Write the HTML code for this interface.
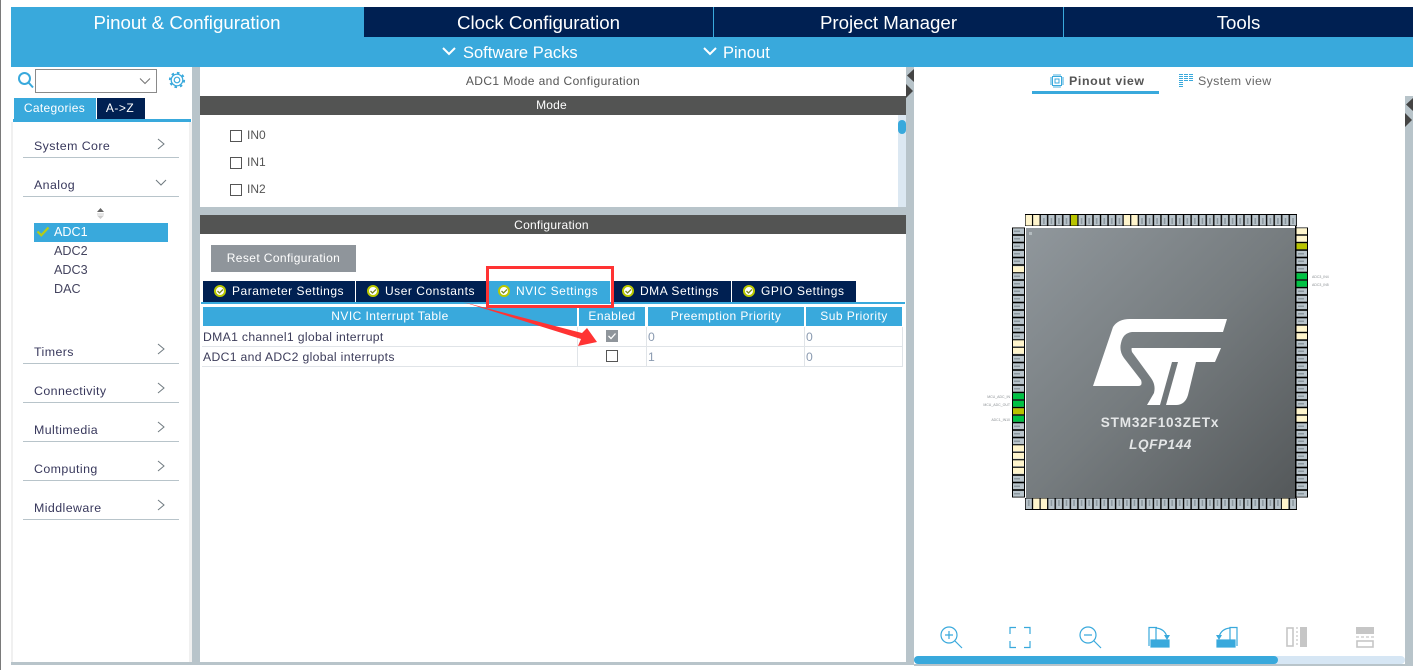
<!DOCTYPE html>
<html><head><meta charset="utf-8"><title>STM32CubeMX</title>
<style>
html,body{margin:0;padding:0;background:#fff}
body{width:1420px;height:670px;position:relative;overflow:hidden;font-family:"Liberation Sans",sans-serif;font-size:12px;color:#3c3c5a}
.a{position:absolute;box-sizing:border-box;white-space:nowrap}
.c{text-align:center}
.hd{font-size:18.7px;color:#fff;line-height:31px;text-align:center;top:7px;height:30px}
.dk{background:#002052}
.bl{background:#39a9dc}
.gr{background:#b8c4ca}
.bar{background:#535453;color:#fff;text-align:center;line-height:19px;height:19px;padding-right:3px}
.cat{left:34px;font-size:12.4px;letter-spacing:.42px;color:#38385c;line-height:16px}
.ln{left:23px;width:156px;height:1px;background:#b8c4ca}
.tab{top:281px;height:21px;background:#002052;color:#fff;line-height:21px;letter-spacing:.52px;font-size:12px}
.th{top:307px;height:19px;background:#39a9dc;color:#fff;text-align:center;line-height:19px;letter-spacing:.45px}
.td{font-size:12.2px;letter-spacing:.33px;line-height:16px}
.cb{width:12px;height:12px;border:1px solid #555;background:#fff}
</style></head><body>
<div class="a" style="left:0;top:0;width:1px;height:670px;background:#7a7a7a"></div>
<!-- header -->
<div class="a bl" style="left:11px;top:7px;width:1402px;height:60px"></div>
<div class="a hd" style="left:11px;width:352px">Pinout &amp; Configuration</div>
<div class="a hd dk" style="left:364px;width:349px">Clock Configuration</div>
<div class="a hd dk" style="left:714px;width:349px">Project Manager</div>
<div class="a hd dk" style="left:1064px;width:349px">Tools</div>
<div class="a" style="left:463px;top:44px;font-size:16.5px;line-height:18px;color:#fff">Software Packs</div>
<div class="a" style="left:723px;top:44px;font-size:16.5px;line-height:18px;color:#fff">Pinout</div>
<svg class="a" style="left:440px;top:46px" width="290" height="14" fill="none" stroke="#fff" stroke-width="2"><path d="M3 2l6 6 6-6M264 2l6 6 6-6"/></svg>

<!-- left panel -->
<div class="a" style="left:11px;top:122px;width:181px;height:540px;background:#fff;border-left:2px solid #f0f0f0;border-right:3px solid #f0f0f0"></div>
<div class="a gr" style="left:192px;top:67px;width:8px;height:598px"></div>
<svg class="a" style="left:17px;top:71px" width="18" height="20" fill="none" stroke="#39a9dc" stroke-width="2"><circle cx="7.5" cy="7.5" r="5.5"/><path d="M11.5 11.5l4.5 5"/></svg>
<div class="a" style="left:35px;top:69px;width:122px;height:24px;border:1px solid #8a8a8a;background:#fff"></div>
<svg class="a" style="left:139px;top:77px" width="14" height="9" fill="none" stroke="#777" stroke-width="1.1"><path d="M1 1.5l5 5 5-5"/></svg>
<svg class="a" style="left:168px;top:71px" width="18" height="18" viewBox="0 0 18 18" fill="none" stroke="#39a9dc"><circle cx="9" cy="9" r="2.8" stroke-width="1.2"/><circle cx="9" cy="9" r="5.8" stroke-width="1.2"/><circle cx="9" cy="9" r="7.2" stroke-width="1.8" stroke-dasharray="2.6 3"/></svg>
<div class="a bl c" style="left:14px;top:98px;width:82px;height:21px;color:#fff;line-height:21px;letter-spacing:.32px;padding-right:1px">Categories</div>
<div class="a dk c" style="left:97px;top:98px;width:48px;height:21px;color:#fff;line-height:21px;letter-spacing:.5px;padding-right:2px">A-&gt;Z</div>
<div class="a bl" style="left:13px;top:119px;width:178px;height:3px"></div>

<div class="a cat" style="top:138px">System Core</div><div class="a ln" style="top:157px"></div>
<div class="a cat" style="top:177px">Analog</div><div class="a ln" style="top:196px"></div>
<div class="a cat" style="top:344px">Timers</div><div class="a ln" style="top:363px"></div>
<div class="a cat" style="top:383px">Connectivity</div><div class="a ln" style="top:402px"></div>
<div class="a cat" style="top:422px">Multimedia</div><div class="a ln" style="top:441px"></div>
<div class="a cat" style="top:461px">Computing</div><div class="a ln" style="top:480px"></div>
<div class="a cat" style="top:500px">Middleware</div><div class="a ln" style="top:519px"></div>
<svg class="a" style="left:150px;top:130px" width="24" height="390" fill="none" stroke="#6f7a80" stroke-width="1">
<path d="M8 9l6 5-6 5M6 50l5 5 5-5M8 214l6 5-6 5M8 253l6 5-6 5M8 292l6 5-6 5M8 331l6 5-6 5M8 370l6 5-6 5"/></svg>
<svg class="a" style="left:96px;top:208px" width="9" height="12"><path d="M4.5 0L8 4H1z" fill="#666"/><path d="M1 5.5h7v1H1z" fill="#ccc"/><path d="M4.5 11L8 7.5H1z" fill="#ccc"/></svg>
<div class="a bl" style="left:34px;top:223px;width:134px;height:19px"></div>
<svg class="a" style="left:36px;top:226px" width="14" height="12" fill="none" stroke="#b5cc18" stroke-width="2.2"><path d="M1.5 5.5l3.8 3.8L12.5 1.5"/></svg>
<div class="a" style="left:54px;top:224px;line-height:17px;font-size:12.6px;color:#fff">ADC1</div>
<div class="a" style="left:54px;top:243px;line-height:17px;font-size:12.6px;color:#44445f">ADC2</div>
<div class="a" style="left:54px;top:262px;line-height:17px;font-size:12.6px;color:#44445f">ADC3</div>
<div class="a" style="left:54px;top:281px;line-height:17px;font-size:12.6px;color:#44445f">DAC</div>

<!-- center panel -->
<div class="a c" style="left:200px;top:73px;width:706px;line-height:16px;color:#555;letter-spacing:.4px">ADC1 Mode and Configuration</div>
<div class="a bar" style="left:200px;top:96px;width:706px;letter-spacing:.2px">Mode</div>
<div class="a cb" style="left:230px;top:130px"></div><div class="a" style="left:247px;top:127px;line-height:16px;color:#555">IN0</div>
<div class="a cb" style="left:230px;top:157px"></div><div class="a" style="left:247px;top:154px;line-height:16px;color:#555">IN1</div>
<div class="a cb" style="left:230px;top:184px"></div><div class="a" style="left:247px;top:181px;line-height:16px;color:#555">IN2</div>
<div class="a" style="left:898px;top:115px;width:8px;height:92px;background:#dce8f2"></div>
<div class="a bl" style="left:898px;top:120px;width:8px;height:14px;border-radius:4px"></div>
<div class="a gr" style="left:200px;top:207px;width:706px;height:8px"></div>
<div class="a bar" style="left:200px;top:215px;width:706px;line-height:21px;letter-spacing:.25px">Configuration</div>
<div class="a c" style="left:211px;top:245px;width:145px;height:27px;background:#8f959b;color:#fff;line-height:27px;letter-spacing:.39px">Reset Configuration</div>

<div class="a tab" style="left:203px;width:152px;padding-left:29px">Parameter Settings</div>
<div class="a tab" style="left:356px;width:131px;padding-left:29px">User Constants</div>
<div class="a tab bl" style="left:488px;width:122px;padding-left:28px;background:#39a9dc">NVIC Settings</div>
<div class="a tab" style="left:611px;width:120px;padding-left:29px">DMA Settings</div>
<div class="a tab" style="left:732px;width:124px;padding-left:29px">GPIO Settings</div>
<svg class="a" style="left:200px;top:281px" width="560" height="21" fill="none">
<g fill="#fff" stroke="#b9c800" stroke-width="2"><circle cx="20" cy="10" r="5"/><circle cx="173" cy="10" r="5"/><circle cx="304" cy="10" r="5"/><circle cx="428" cy="10" r="5"/><circle cx="549" cy="10" r="5"/></g>
<g stroke="#7d8a20" stroke-width="1.3"><path d="M17.5 10l2 2 3.5-3.5M170.500 10l2 2 3.5-3.5M301.500 10l2 2 3.5-3.5M425.500 10l2 2 3.5-3.5M546.500 10l2 2 3.5-3.5"/></g></svg>
<div class="a bl" style="left:201px;top:302px;width:704px;height:2px"></div>

<div class="a th" style="left:203px;width:374px">NVIC Interrupt Table</div>
<div class="a th" style="left:579px;width:66px">Enabled</div>
<div class="a th" style="left:648px;width:156px">Preemption Priority</div>
<div class="a th" style="left:806px;width:96px">Sub Priority</div>
<div class="a" style="left:202px;top:346px;width:701px;height:1px;background:#e0e4e8"></div>
<div class="a" style="left:202px;top:366px;width:701px;height:1px;background:#e0e4e8"></div>
<div class="a" style="left:577px;top:327px;width:1px;height:40px;background:#e0e4e8"></div>
<div class="a" style="left:646px;top:327px;width:1px;height:40px;background:#e0e4e8"></div>
<div class="a" style="left:804px;top:327px;width:1px;height:40px;background:#e0e4e8"></div>
<div class="a" style="left:902px;top:327px;width:1px;height:40px;background:#e0e4e8"></div>
<div class="a td" style="left:203px;top:329px">DMA1 channel1 global interrupt</div>
<div class="a td" style="left:203px;top:349px">ADC1 and ADC2 global interrupts</div>
<div class="a td" style="left:648px;top:329px;color:#8a9ab0">0</div>
<div class="a td" style="left:648px;top:349px;color:#8a9ab0">1</div>
<div class="a td" style="left:806px;top:329px;color:#8a9ab0">0</div>
<div class="a td" style="left:806px;top:349px;color:#8a9ab0">0</div>
<svg class="a" style="left:606px;top:330px" width="12" height="12"><rect width="12" height="12" fill="#8f959b"/><path d="M2.5 6l2.5 2.5 4.5-5" fill="none" stroke="#fff" stroke-width="1.3"/></svg>
<div class="a cb" style="left:606px;top:350px"></div>

<!-- annotations -->
<svg class="a" style="left:0;top:0" width="1420" height="670" fill="none">
<rect x="487.500" y="267.500" width="125" height="39" stroke="#ff3333" stroke-width="3"/>
<path d="M463 302L582 333L587 328L597 342L578 346L581 339Z" fill="#ff3333"/>
</svg>

<!-- right side strips -->
<div class="a gr" style="left:906px;top:67px;width:8px;height:598px"></div>
<div class="a gr" style="left:1405px;top:96px;width:8px;height:570px"></div>
<div class="a gr" style="left:200px;top:662px;width:706px;height:3px"></div>
<div class="a gr" style="left:11px;top:662px;width:181px;height:3px"></div>
<svg class="a" style="left:906px;top:67px" width="8" height="32"><path d="M8 2V15L1 8.500z" fill="#444"/><path d="M0 17L7 24L0 31z" fill="#444"/></svg>
<svg class="a" style="left:1405px;top:96px" width="8" height="34"><path d="M8 2V15L1 8.500z" fill="#444"/><path d="M0 17L7 24L0 31z" fill="#444"/></svg>

<!-- view tabs -->
<svg class="a" style="left:1050px;top:74px" width="14" height="14" fill="none" stroke="#39a9dc"><rect x="2.500" y="2.500" width="9" height="9" stroke-width="1"/><rect x="5" y="5" width="4" height="4" stroke-width="1"/><path d="M4 0v2M6 0v2M8 0v2M10 0v2M4 12v2M6 12v2M8 12v2M10 12v2M0 4h2M0 6h2M0 8h2M0 10h2M12 4h2M12 6h2M12 8h2M12 10h2" stroke-width=".9"/></svg>
<div class="a" style="left:1069px;top:73px;line-height:16px;font-weight:bold;color:#555;letter-spacing:.62px;font-size:12.4px">Pinout view</div>
<div class="a bl" style="left:1032px;top:91px;width:127px;height:3px"></div>
<svg class="a" style="left:1179px;top:74px" width="15" height="14" stroke="#39a9dc" stroke-width="1" fill="none"><path d="M0 .500h4M5 .500h4M10 .500h4M0 2.500h4M5 2.500h4M10 2.500h4M0 4.500h4M5 4.500h4M10 4.500h4M0 6.500h4M5 6.500h4M10 6.500h4M0 8.500h4M0 10.500h4M0 12.500h4"/></svg>
<div class="a" style="left:1198px;top:73px;line-height:16px;color:#666;letter-spacing:.36px;font-size:12.4px">System view</div>

<!-- chip -->
<svg class="a" style="left:980px;top:205px" width="360" height="315" viewBox="980 205 360 315">
<defs>
<linearGradient id="g" x1="0" y1="0" x2="1" y2="1"><stop offset="0" stop-color="#90979c"/><stop offset=".5" stop-color="#767c7f"/><stop offset="1" stop-color="#54585a"/></linearGradient>
<pattern id="pt" x="1025" y="214" width="7.550" height="12" patternUnits="userSpaceOnUse"><rect width="7.550" height="12" fill="#000"/><rect x=".7" y="1" width="6.200" height="10.500" fill="#b9c4cb"/><rect x="3" y="4" width="1.500" height="6" fill="#8b979e"/></pattern>
<pattern id="pb" x="1025" y="498" width="7.550" height="12" patternUnits="userSpaceOnUse"><rect width="7.550" height="12" fill="#000"/><rect x=".7" y=".5" width="6.200" height="10.500" fill="#b9c4cb"/><rect x="3" y="2" width="1.500" height="6" fill="#8b979e"/></pattern>
<pattern id="pl" x="1012" y="227.500" width="13" height="7.500" patternUnits="userSpaceOnUse"><rect width="13" height="7.500" fill="#000"/><rect x="1" y=".8" width="11" height="5.900" fill="#b9c4cb"/><rect x="2" y="3" width="6" height="1.500" fill="#8b979e"/></pattern>
<pattern id="pr" x="1295" y="227.500" width="13" height="7.500" patternUnits="userSpaceOnUse"><rect width="13" height="7.500" fill="#000"/><rect x="1" y=".8" width="11" height="5.900" fill="#b9c4cb"/><rect x="3" y="3" width="6" height="1.500" fill="#8b979e"/></pattern>
</defs>
<rect x="1025" y="214" width="272" height="12" fill="url(#pt)"/>
<rect x="1025" y="498" width="272" height="12" fill="url(#pb)"/>
<rect x="1012" y="227.500" width="13" height="270" fill="url(#pl)"/>
<rect x="1295" y="227.500" width="13" height="270" fill="url(#pr)"/>
<g fill="#fff5cc">
<rect x="1025.700" y="215" width="6.200" height="10.500"/><rect x="1033.250" y="215" width="6.200" height="10.500"/><rect x="1123.800" y="215" width="6.200" height="10.500"/><rect x="1131.400" y="215" width="6.200" height="10.500"/>
<rect x="1033.250" y="498.500" width="6.200" height="10.500"/><rect x="1040.800" y="498.500" width="6.200" height="10.500"/><rect x="1282" y="498.500" width="6.200" height="10.500"/>
<rect x="1013" y="266.300" width="11" height="5.900"/><rect x="1013" y="340.300" width="11" height="5.900"/><rect x="1013" y="347.800" width="11" height="5.900"/><rect x="1013" y="445.300" width="11" height="5.900"/><rect x="1013" y="452.800" width="11" height="5.900"/><rect x="1013" y="460.300" width="11" height="5.900"/><rect x="1013" y="467.800" width="11" height="5.900"/>
<rect x="1296" y="228.300" width="11" height="5.900"/><rect x="1296" y="235.800" width="11" height="5.900"/><rect x="1296" y="325.800" width="11" height="5.900"/><rect x="1296" y="333.300" width="11" height="5.900"/><rect x="1296" y="408.300" width="11" height="5.900"/><rect x="1296" y="415.800" width="11" height="5.900"/>
</g>
<g fill="#b9c400">
<rect x="1071" y="215" width="6.200" height="10.500"/>
<rect x="1296" y="243.300" width="11" height="5.900"/>
<rect x="1013" y="408.300" width="11" height="5.900"/>
</g>
<g fill="#00c244">
<rect x="1296" y="273.300" width="11" height="5.900"/><rect x="1296" y="280.800" width="11" height="5.900"/>
<rect x="1013" y="393.300" width="11" height="5.900"/><rect x="1013" y="400.800" width="11" height="5.900"/><rect x="1013" y="415.800" width="11" height="5.900"/>
</g>
<rect x="1025" y="227" width="270" height="270" fill="#fff"/>
<rect x="1026" y="228" width="270" height="270" fill="url(#g)"/>
<rect x="1295" y="226" width="1.500" height="272" fill="#000"/>
<rect x="1029" y="232" width="3" height="3" fill="#b4bcc0"/>
<path d="M1227 319H1130Q1118 319 1113 327L1093 386H1138Q1143 386 1141 380L1124 358Q1119 351 1121 343Q1123 333 1132 332H1223Z" fill="#fff"/>
<path d="M1132 348Q1131 348 1132 352L1151 378Q1156 385 1154 393L1147 405H1160L1172 362H1178L1166 405H1176Q1185 405 1188 395L1196 362H1215L1221 348Z" fill="#fff"/>
<text x="1160" y="427" text-anchor="middle" font-family="Liberation Sans" font-weight="bold" font-size="13.600" fill="#e4e6e7" letter-spacing=".8">STM32F103ZETx</text>
<text x="1160.500" y="449" text-anchor="middle" font-family="Liberation Sans" font-weight="bold" font-style="italic" font-size="13.600" fill="#e4e6e7" letter-spacing=".55">LQFP144</text>
<g font-family="Liberation Sans" font-size="3.500" fill="#8a8f93">
<text x="1010" y="398" text-anchor="end">MCU_ADC_IN</text><text x="1010" y="406" text-anchor="end">MCU_ADC_OUT</text><text x="1010" y="421" text-anchor="end">ADC1_IN10</text>
<text x="1312" y="278">ADC3_IN4</text><text x="1312" y="286">ADC3_IN5</text>
</g>
</svg>

<!-- toolbar -->
<svg class="a" style="left:930px;top:620px" width="460" height="36" fill="none" stroke="#39a9dc" stroke-width="1.200">
<circle cx="19" cy="15" r="8"/><path d="M25 21l7 7M15 15h8M19 11v8" />
<path d="M80 14V7.500h6M94 7.500h6V14M80 21v6.500h6M94 27.500h6V21"/>
<circle cx="158" cy="15" r="8"/><path d="M164 21l7 7M154 15h8"/>
<path d="M219 26V7.500h7V26M226 7.500h1"/><rect x="221" y="20" width="18" height="7" fill="#39a9dc"/><path d="M226 8q9 1 11 9"/><path d="M234 15l3 5 3-5z" fill="#39a9dc" stroke="none"/>
<path d="M307 26V7.500h-7V26"/><rect x="287" y="20" width="18" height="7" fill="#39a9dc"/><path d="M300 8q-9 1-11 9"/><path d="M286 15l3 5 3-5z" fill="#39a9dc" stroke="none"/>
<g stroke="#c6c6c6"><rect x="357" y="8" width="6" height="18" stroke-width="1.600"/><path d="M367 7v20" stroke-dasharray="2 2"/></g><rect x="370" y="7" width="7" height="20" fill="#c6c6c6" stroke="none"/>
<rect x="426" y="7" width="18" height="7" fill="#c6c6c6" stroke="none"/><g stroke="#c6c6c6"><path d="M426 17h18" stroke-dasharray="3 2"/><rect x="427" y="21" width="16" height="6" stroke-width="1.600"/></g>
</svg>
<div class="a" style="left:914px;top:656px;width:491px;height:8px;background:#d6e6f4;border-radius:4px"></div>
<div class="a bl" style="left:914px;top:656px;width:364px;height:8px;border-radius:4px"></div>
<div class="a gr" style="left:914px;top:664px;width:491px;height:2px"></div>
</body></html>
